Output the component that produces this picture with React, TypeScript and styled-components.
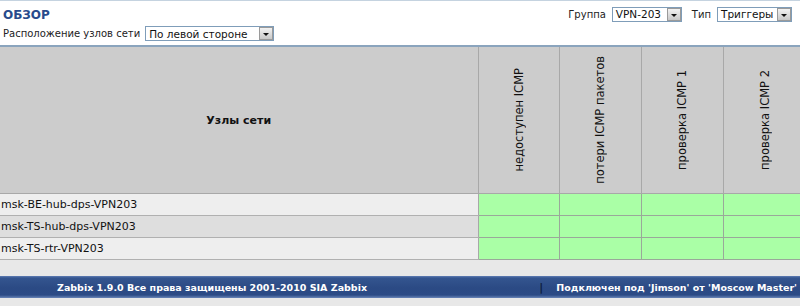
import React from 'react';
import styled, { createGlobalStyle } from 'styled-components';

const GlobalStyle = createGlobalStyle`
  html, body {
    margin: 0;
    padding: 0;
    background: #e8e8e8;
    overflow: hidden;
  }
  body {
    font-family: "DejaVu Sans", Verdana, sans-serif;
    width: 800px;
  }
`;

const Page = styled.div`
  width: 800px;
  height: 306px;
  overflow: hidden;
  background: #e8e8e8;
`;

const Panel = styled.div`
  background: #ffffff;
  border-top: 1px solid #c5d3e0;
  border-bottom: 2px solid #8aa4bd;
  height: 44px;
  padding: 0 3px;
  display: grid;
  grid-template-columns: 1fr auto;
  grid-template-rows: 24px 20px;
  align-items: center;
`;

const Title = styled.div`
  color: #284b8c;
  font-weight: bold;
  font-size: 12px;
  padding-top: 3px;
`;

const Filters = styled.div`
  display: flex;
  align-items: center;
  gap: 6px;
  padding-top: 2px;
  padding-right: 5px;
`;

const Label = styled.span<{ $first?: boolean }>`
  font-size: 10px;
  color: #222;
  margin-left: ${(p) => (p.$first ? 0 : 4)}px;
`;

const Layout = styled.div`
  display: flex;
  align-items: center;
  gap: 5px;
  grid-column: 1 / 3;
  padding-bottom: 3px;
`;

const Select = styled.div<{ $w: number }>`
  display: flex;
  align-items: center;
  justify-content: space-between;
  width: ${(p) => p.$w}px;
  height: 15px;
  box-sizing: border-box;
  border: 1px solid #7f9db9;
  background: #fff;
  font-size: 10.5px;
  color: #111;
  padding-left: 3px;
`;

const DropBtn = styled.span`
  width: 14px;
  height: 13px;
  box-sizing: border-box;
  border: 1px solid #9a9a9a;
  background: linear-gradient(#f2f2f2, #c8c8c8);
  display: flex;
  align-items: flex-end;
  justify-content: center;
  padding-bottom: 3px;
  &::after {
    content: '';
    border-left: 3px solid transparent;
    border-right: 3px solid transparent;
    border-top: 3px solid #111;
  }
`;

const Grid = styled.table`
  border-collapse: collapse;
  table-layout: fixed;
  width: 806px;
  font-size: 11px;
`;

const HeadCell = styled.th`
  background: #cccccc;
  height: 146px;
  border-right: 1px solid #a8a8a8;
  border-bottom: 1px solid #a8a8a8;
  padding: 0;
  font-weight: bold;
  font-size: 11px;
  color: #111;
  text-align: center;
  vertical-align: middle;
`;

const Vertical = styled.div`
  writing-mode: vertical-rl;
  transform: rotate(180deg);
  font-weight: normal;
  font-size: 11.5px;
  color: #111;
  margin: 0 auto;
  white-space: nowrap;
`;

const Row = styled.tr<{ $alt: boolean }>`
  height: 22px;
  background: ${(p) => (p.$alt ? '#dedede' : '#eeeeee')};
`;

const HostCell = styled.td`
  padding: 0 0 0 1px;
  font-size: 11px;
  color: #111;
  border-bottom: 1px solid #b0b0b0;
  border-right: 1px solid #a8a8a8;
  white-space: nowrap;
`;

const StatusCell = styled.td`
  background: #aaffa6;
  border-bottom: 1px solid #9aa89a;
  border-right: 1px solid #9aa89a;
`;

const Footer = styled.div`
  margin-top: 16px;
  height: 22px;
  background: linear-gradient(#5f7db4 0px, #34558f 2px, #2b4a84 12px, #2c4b86 19px, #6a86b8 22px);
  display: flex;
  align-items: center;
  color: #fff;
  font-weight: bold;
  font-size: 9.5px;
`;

const Copy = styled.span`
  padding-left: 57px;
  flex: 1;
`;

const Sep = styled.span`
  color: #0e1f40;
  font-size: 11px;
  margin-right: 13px;
`;

const Conn = styled.span`
  padding-right: 3px;
`;

const triggers = ['недоступен ICMP', 'потери ICMP пакетов', 'проверка ICMP 1', 'проверка ICMP 2'];
const hosts = ['msk-BE-hub-dps-VPN203', 'msk-TS-hub-dps-VPN203', 'msk-TS-rtr-VPN203'];

export default function App() {
  return (
    <Page>
      <GlobalStyle />
      <Panel>
        <Title>ОБЗОР</Title>
        <Filters>
          <Label>Группа</Label>
          <Select $w={70}>VPN-203<DropBtn /></Select>
          <Label>Тип</Label>
          <Select $w={75}>Триггеры<DropBtn /></Select>
        </Filters>
        <Layout>
          <Label $first>Расположение узлов сети</Label>
          <Select $w={129}>По левой стороне<DropBtn /></Select>
        </Layout>
      </Panel>
      <Grid>
        <colgroup>
          <col style={{ width: 478 }} />
          <col style={{ width: 81 }} />
          <col style={{ width: 82 }} />
          <col style={{ width: 82 }} />
          <col style={{ width: 83 }} />
        </colgroup>
        <thead>
          <tr>
            <HeadCell>Узлы сети</HeadCell>
            {triggers.map((t) => (
              <HeadCell key={t}>
                <Vertical>{t}</Vertical>
              </HeadCell>
            ))}
          </tr>
        </thead>
        <tbody>
          {hosts.map((h, i) => (
            <Row key={h} $alt={i === 1}>
              <HostCell>{h}</HostCell>
              {triggers.map((t) => (
                <StatusCell key={t} />
              ))}
            </Row>
          ))}
        </tbody>
      </Grid>
      <Footer>
        <Copy>Zabbix 1.9.0 Все права защищены 2001-2010 SIA Zabbix</Copy>
        <Sep>|</Sep>
        <Conn>Подключен под 'Jimson' от 'Moscow Master'</Conn>
      </Footer>
    </Page>
  );
}
